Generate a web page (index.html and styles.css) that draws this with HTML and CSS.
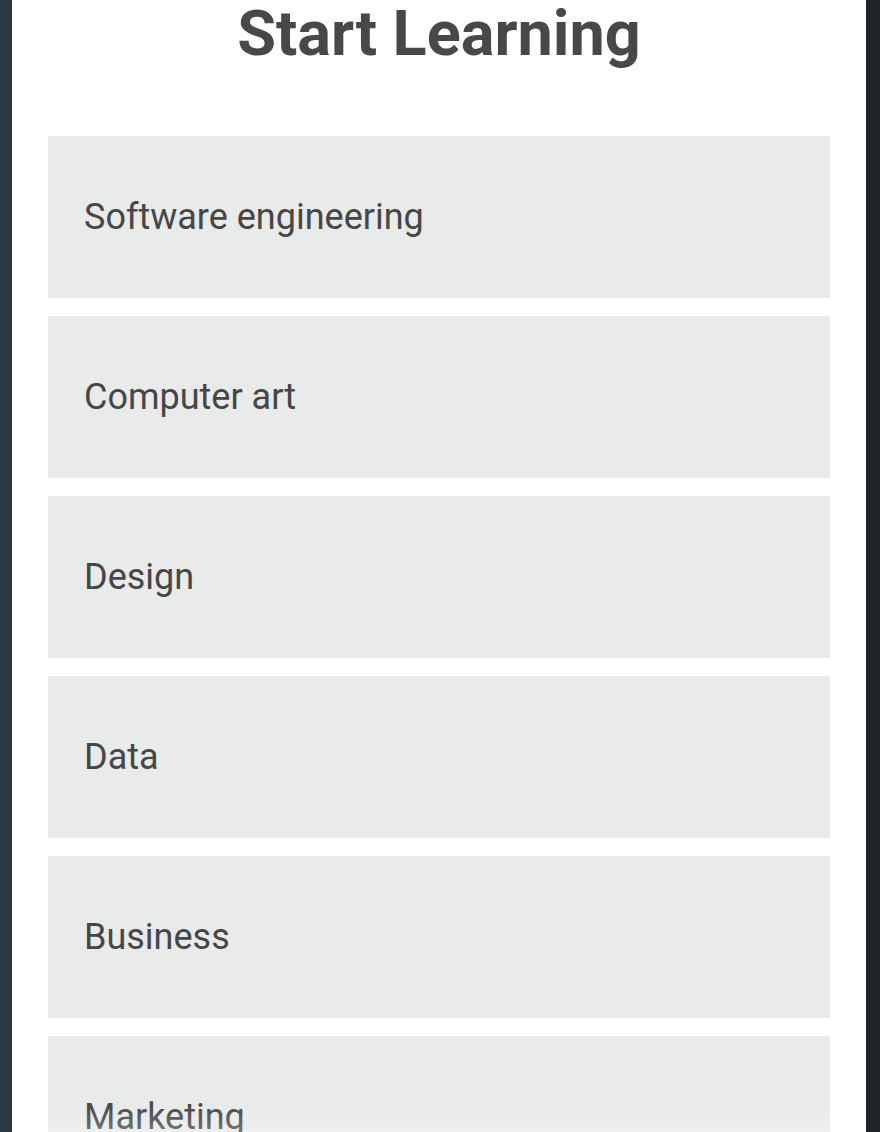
FILE: index.html
```html
<!DOCTYPE html>
<html lang="en">
<head>
<meta charset="utf-8">
<title>Start Learning</title>
<link rel="stylesheet" href="styles.css">
</head>
<body>
<main class="panel">
  <h1 class="title">Start Learning</h1>
  <ul class="topics">
    <li class="topic">Software engineering</li>
    <li class="topic">Computer art</li>
    <li class="topic">Design</li>
    <li class="topic">Data</li>
    <li class="topic">Business</li>
    <li class="topic">Marketing</li>
  </ul>
</main>
<div class="fade"></div>
</body>
</html>
```
FILE: styles.css
```css
html, body {
  margin: 0;
  padding: 0;
  height: 100%;
  overflow: hidden;
}
body {
  background: linear-gradient(90deg, #2c3a40 0%, #25313a 50%, #1e2628 100%);
  font-family: Roboto, "Liberation Sans", sans-serif;
  color: #474747;
}
.panel {
  margin: 0 14px 0 12px;
  background: #ffffff;
  min-height: 100%;
  padding: 0 36px;
  box-sizing: border-box;
}
.title {
  margin: -3px 0 0;
  height: 74px;
  font-size: 63px;
  font-weight: 700;
  text-align: center;
  color: #484848;
  line-height: 74px;
}
.topics {
  list-style: none;
  margin: 65px 0 0;
  padding: 0;
  display: flex;
  flex-direction: column;
  gap: 18px;
}
.topic {
  height: 162px;
  background: #e9eaea;
  display: flex;
  align-items: center;
  padding: 0 36px;
  font-size: 36px;
  color: #464646;
}
.fade {
  position: fixed;
  left: 12px;
  right: 14px;
  bottom: 0;
  height: 30px;
  background: linear-gradient(180deg, rgba(255,255,255,0) 0%, rgba(255,255,255,0.25) 100%);
}
```
